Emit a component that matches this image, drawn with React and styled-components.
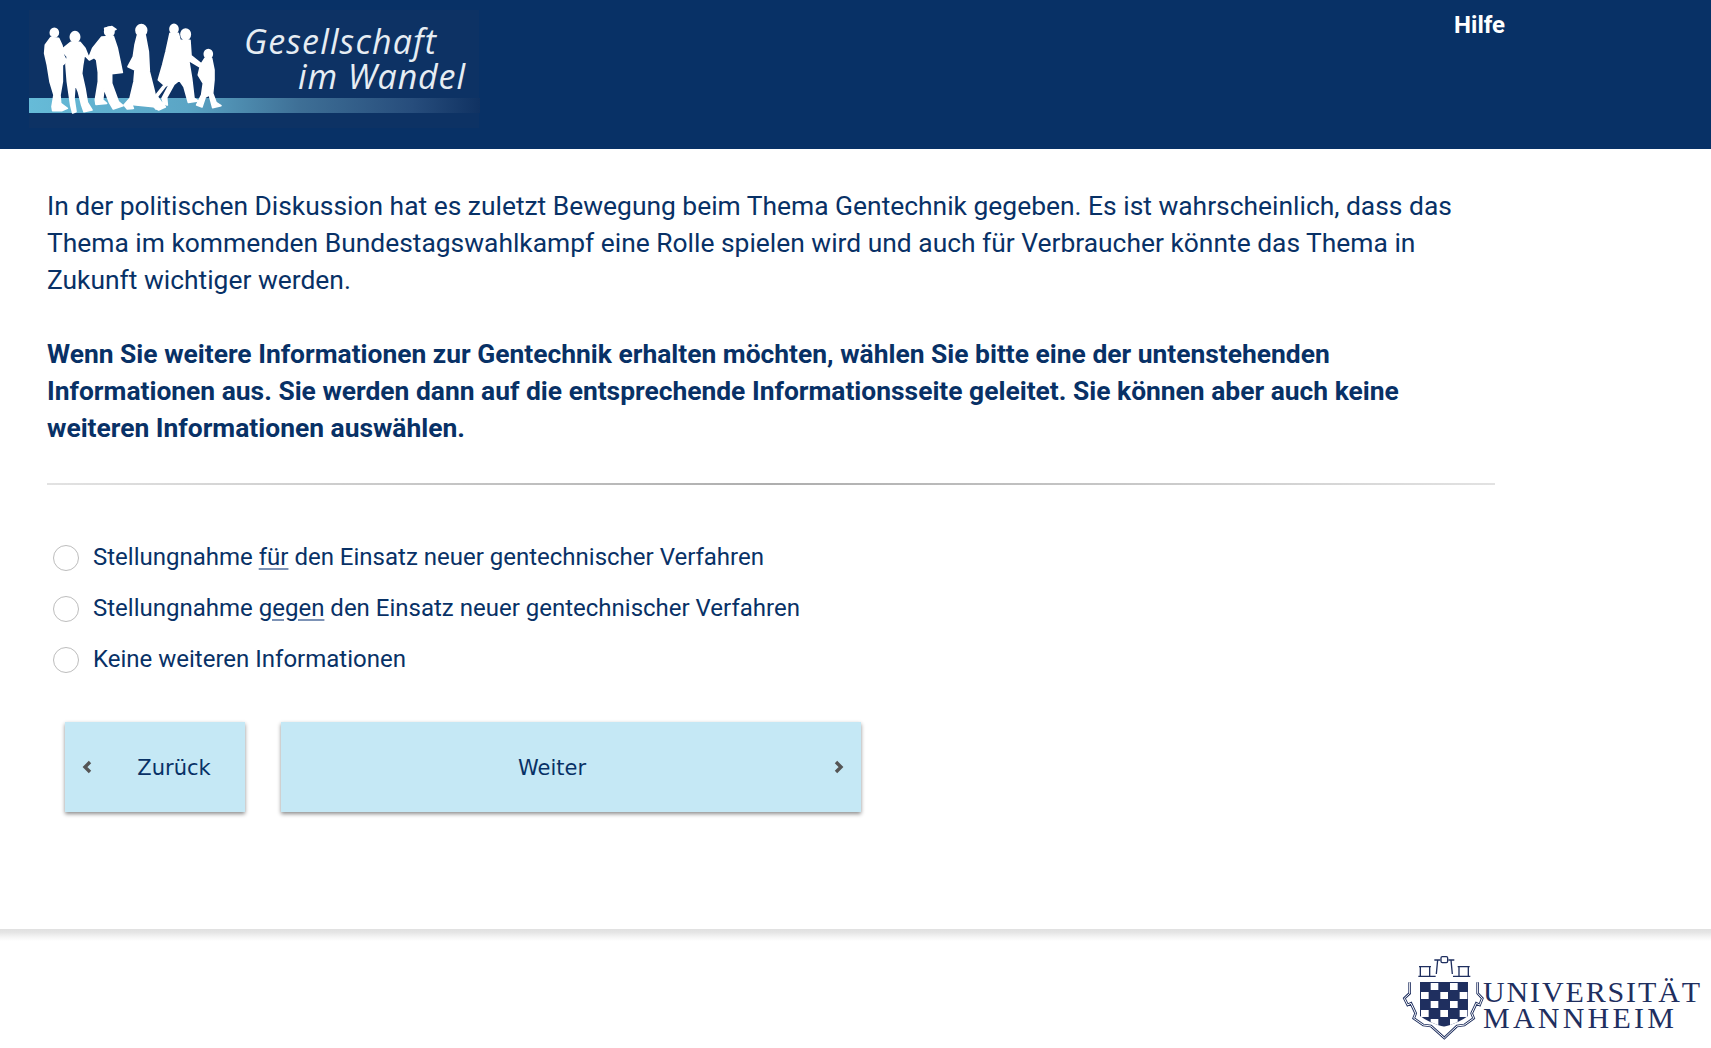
import React from 'react';
import styled, { createGlobalStyle } from 'styled-components';

const NAVY = '#083166';

const GlobalStyle = createGlobalStyle`
  html, body {
    margin: 0;
    padding: 0;
    background: #fff;
  }
  body {
    font-family: Roboto, "Liberation Sans", sans-serif;
    color: ${NAVY};
  }
`;

const Page = styled.div`
  height: 1048px;
  display: flex;
  flex-direction: column;
  overflow: hidden;
`;

const Header = styled.header`
  height: 149px;
  flex: none;
  background: ${NAVY};
  display: flex;
  align-items: flex-start;
  justify-content: space-between;
`;

const LogoSvg = styled.svg`
  width: 500px;
  height: 149px;
  display: block;
`;

const HelpLink = styled.a`
  margin: 10px 206px 0 0;
  font-size: 24px;
  line-height: 30px;
  font-weight: 700;
  color: #fff;
`;

const Main = styled.main`
  flex: 1;
  width: 1448px;
  padding: 39px 0 0 47px;
`;

const Lead = styled.p`
  margin: 0 0 ${(p) => (p.$bold ? 36 : 37)}px;
  font-size: 26.4px;
  line-height: 37px;
  font-weight: ${(p) => (p.$bold ? 700 : 400)};
`;

const Divider = styled.hr`
  margin: 0;
  height: 2px;
  border: 0;
  background: linear-gradient(90deg, #e2e2e2, #aeaeae 50%, #e2e2e2);
`;

const OptionList = styled.div`
  margin-top: 54px;
  display: flex;
  flex-direction: column;
  gap: 16px;
`;

const Option = styled.label`
  display: flex;
  align-items: center;
  height: 35px;
  padding-left: 6px;
  font-size: 24px;
`;

const Radio = styled.span`
  width: 26px;
  height: 26px;
  margin: 2px 14px 0 0;
  flex: none;
  box-sizing: border-box;
  border: 1px solid #bdbdbd;
  border-radius: 50%;
  background: #fff;
`;

const Marked = styled.span`
  text-decoration: underline;
  text-decoration-color: #7d93b6;
  text-underline-offset: 3px;
`;

const ButtonRow = styled.div`
  margin: 46px 0 0 18px;
  display: flex;
  gap: 36px;
`;

const NavButton = styled.button`
  position: relative;
  width: ${(p) => p.$width}px;
  height: 90px;
  padding: ${(p) => (p.$back ? '1px 0 0 38px' : '1px 38px 0 0')};
  border: 0;
  border-radius: 0;
  background: #c5e8f5;
  color: ${NAVY};
  font-family: "DejaVu Sans", Verdana, sans-serif;
  font-size: 21px;
  box-shadow: 0 2px 4px rgba(0, 0, 0, 0.45);
`;

const Chevron = styled.svg`
  position: absolute;
  top: 38px;
  ${(p) => (p.$back ? 'left: 17px;' : 'right: 17px;')}
  width: 11px;
  height: 14px;
`;

const FooterEdge = styled.div`
  height: 12px;
  flex: none;
  background: linear-gradient(#e0e0e0, #e6e6e6 30%, #f6f6f6 70%, #fff);
`;

const Footer = styled.footer`
  height: 107px;
  flex: none;
  display: flex;
  justify-content: flex-end;
`;

const UniSvg = styled.svg`
  width: 331px;
  height: 107px;
  display: block;
`;

const Logo = () => (
  <LogoSvg viewBox="0 0 500 149">
    <defs>
      <linearGradient id="bar" x1="0" x2="1" y1="0" y2="0">
        <stop offset="0" stopColor="#66bbd8" />
        <stop offset="0.35" stopColor="#5ba5c5" />
        <stop offset="0.6" stopColor="#3e6f96" />
        <stop offset="0.85" stopColor="#274d7c" />
        <stop offset="1" stopColor="#103262" />
      </linearGradient>
      <filter id="soft">
        <feGaussianBlur stdDeviation="0.35" />
      </filter>
    </defs>
    <rect x="29" y="10" width="450" height="118" fill="#0d3264" />
    <rect x="29" y="98" width="451" height="15" fill="url(#bar)" />
    <g
      transform="translate(30 15) scale(0.3333)"
      fill="#fff"
      stroke="#fff"
      strokeWidth="5"
      strokeLinejoin="round"
      filter="url(#soft)"
    >
      <ellipse cx="73" cy="53" rx="12" ry="13" />
      <path d="M62 68 L86 70 L96 92 L100 120 L110 140 L97 150 L97 200 L90 240 L92 265 L112 280 L95 287 L68 287 L66 275 L72 240 L60 200 L52 150 L44 115 L46 90 Z" />
      <ellipse cx="135" cy="66" rx="14" ry="16" />
      <path d="M122 82 L150 82 L165 100 L175 125 L190 116 L197 125 L178 135 L163 120 L158 150 L155 175 L165 220 L172 262 L186 285 L162 290 L155 270 L145 230 L135 205 L132 250 L138 290 L128 294 L122 270 L112 200 L108 150 L112 125 L94 105 Z" />
      <ellipse cx="238" cy="50" rx="14" ry="14" />
      <path d="M224 40 L246 35 L258 43 L248 47 L226 50 Z" />
      <path d="M215 66 L250 64 L262 100 L277 172 L245 176 L245 205 L265 260 L279 272 L250 282 L238 262 L222 220 L218 255 L230 265 L198 268 L196 255 L205 200 L205 172 L200 135 L190 125 L176 130 L188 100 Z" />
      <ellipse cx="334" cy="46" rx="16" ry="17" />
      <path d="M322 62 L346 62 L355 110 L358 170 L372 225 L380 260 L406 276 L386 285 L370 275 L318 270 L305 268 L310 280 L292 282 L282 270 L300 250 L312 200 L315 165 L294 155 L310 125 L315 90 Z" />
      <ellipse cx="432" cy="42" rx="12" ry="14" />
      <ellipse cx="467" cy="58" rx="14" ry="16" />
      <path d="M420 55 L445 55 L450 75 L480 76 L483 122 L516 148 L510 156 L476 136 L485 190 L492 250 L505 258 L475 262 L462 215 L448 195 L432 208 L410 248 L412 270 L402 268 L396 250 L420 205 L405 215 L382 245 L404 275 L378 282 L370 268 L378 240 L402 210 L385 195 L398 150 L408 110 Z" />
      <ellipse cx="535" cy="117" rx="12" ry="13" />
      <path d="M525 130 L545 130 L552 165 L552 195 L548 235 L558 262 L573 272 L548 278 L538 240 L526 246 L516 276 L500 270 L515 240 L520 205 L505 180 L512 150 Z" />
    </g>
    <g fill="#e6edf3" fontFamily="'Open Sans', sans-serif" fontStyle="italic" fontSize="34">
      <text x="244" y="54" textLength="192">Gesellschaft</text>
      <text x="298" y="89" textLength="167">im Wandel</text>
    </g>
  </LogoSvg>
);

const WALL =
  'M44 97 V130 L28 145 L38 165 L48 160 L62 190 L56 205 L85 225 L108 228 L148 264 L186 228 L208 225 L236 205 L230 190 L244 160 L254 165 L262 145 L248 130 V97';

// checker cells of the shield, light ones on every other square
const lightCells = [];
for (let row = 0; row < 5; row++) {
  for (let col = 0; col < 5; col++) {
    if ((row + col) % 2 === 1) lightCells.push({ row, col });
  }
}

const UniLogo = () => (
  <UniSvg viewBox="0 0 331 107">
    <g transform="translate(15 9) scale(0.3333)">
      <defs>
        <clipPath id="shield">
          <path d="M75 96 H219 V198 Q190 220 147 230 Q104 220 75 198 Z" />
        </clipPath>
      </defs>
      <g clipPath="url(#shield)">
        <rect x="70" y="90" width="155" height="145" fill="#1f2f5f" />
        <g fill="#fff">
          {lightCells.map(({ row, col }) => (
            <rect key={`${row}-${col}`} x={78 + col * 29} y={99 + row * 27} width="23" height="21" />
          ))}
        </g>
      </g>
      <path d={WALL} fill="none" stroke="#1f2f5f" strokeWidth="8" />
      <path d={WALL} fill="none" stroke="#fff" strokeWidth="3" />
      <g fill="none" stroke="#1f2f5f" strokeWidth="4">
        <path d="M118 30 H136 M160 30 H178 M128 30 L124 72 M168 30 L172 72" />
        <rect x="138" y="20" width="20" height="18" rx="4" />
        <path d="M72 50 H108 M76 50 V78 M104 50 V78 M70 79 H122" />
        <path d="M188 50 H224 M192 50 V78 M220 50 V78 M174 79 H226" />
      </g>
    </g>
    <g fill="#1f2f5f" fontFamily="'Liberation Serif', serif" fontSize="30">
      <text x="103" y="61" textLength="217">UNIVERSITÄT</text>
      <text x="103" y="87" textLength="191">MANNHEIM</text>
    </g>
  </UniSvg>
);

const App = () => (
  <Page>
    <GlobalStyle />
    <Header>
      <Logo />
      <HelpLink>Hilfe</HelpLink>
    </Header>
    <Main>
      <Lead>
        In der politischen Diskussion hat es zuletzt Bewegung beim Thema Gentechnik gegeben. Es ist
        wahrscheinlich, dass das Thema im kommenden Bundestagswahlkampf eine Rolle spielen wird und
        auch für Verbraucher könnte das Thema in Zukunft wichtiger werden.
      </Lead>
      <Lead $bold>
        Wenn Sie weitere Informationen zur Gentechnik erhalten möchten, wählen Sie bitte eine der
        untenstehenden Informationen aus. Sie werden dann auf die entsprechende Informationsseite
        geleitet. Sie können aber auch keine weiteren Informationen auswählen.
      </Lead>
      <Divider />
      <OptionList>
        <Option>
          <Radio />
          <span>
            Stellungnahme <Marked>für</Marked> den Einsatz neuer gentechnischer Verfahren
          </span>
        </Option>
        <Option>
          <Radio />
          <span>
            Stellungnahme <Marked>gegen</Marked> den Einsatz neuer gentechnischer Verfahren
          </span>
        </Option>
        <Option>
          <Radio />
          <span>Keine weiteren Informationen</span>
        </Option>
      </OptionList>
      <ButtonRow>
        <NavButton $back $width={180}>
          <Chevron $back viewBox="0 0 11 14">
            <path d="M8 2 L3 7 L8 12" fill="none" stroke="#555" strokeWidth="3.4" />
          </Chevron>
          Zurück
        </NavButton>
        <NavButton $width={580}>
          Weiter
          <Chevron viewBox="0 0 11 14">
            <path d="M3 2 L8 7 L3 12" fill="none" stroke="#555" strokeWidth="3.4" />
          </Chevron>
        </NavButton>
      </ButtonRow>
    </Main>
    <FooterEdge />
    <Footer>
      <UniLogo />
    </Footer>
  </Page>
);

export default App;
